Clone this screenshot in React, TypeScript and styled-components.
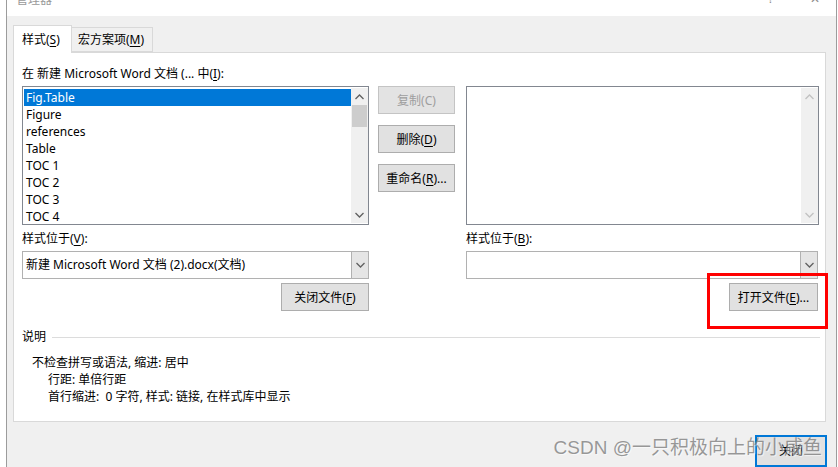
import React from 'react';
import styled, { createGlobalStyle } from 'styled-components';

const GlobalStyle = createGlobalStyle`
    html, body {
        margin: 0;
        padding: 0;
        background: #ffffff;
    }
    body {
        font-family: "Segoe UI", "Noto Sans", "Noto Sans CJK SC", sans-serif;
        font-size: 12px;
        color: #000000;
    }
    * {
        box-sizing: border-box;
    }
`;

const leftStyles = ['Fig.Table', 'Figure', 'references', 'Table', 'TOC 1', 'TOC 2', 'TOC 3', 'TOC 4'];

function Chevron({ up, muted }: { up?: boolean; muted?: boolean }) {
    return (
        <svg width="9" height="6" viewBox="0 0 9 6">
            <path
                d={up ? 'M0.5 5 L4.5 1 L8.5 5' : 'M0.5 1 L4.5 5 L8.5 1'}
                fill="none"
                stroke={muted ? '#c2c2c2' : '#606060'}
                strokeWidth="1.3"
            />
        </svg>
    );
}

function Key({ children }: { children: React.ReactNode }) {
    return <Mnemonic>{children}</Mnemonic>;
}

function App() {
    return (
        <>
            <GlobalStyle />
            <Window>
                <TitleBar>
                    <TitleText>管理器</TitleText>
                    <TitleControls>
                        <TitleGlyph>?</TitleGlyph>
                        <TitleGlyph>✕</TitleGlyph>
                    </TitleControls>
                </TitleBar>

                <Body>
                    <TabRow>
                        <Tab $active>
                            样式(<Key>S</Key>)
                        </Tab>
                        <Tab>
                            宏方案项(<Key>M</Key>)
                        </Tab>
                    </TabRow>

                    <Panel>
                        <Upper>
                            <LeftSide>
                                <Label>
                                    在 新建 Microsoft Word 文档 (... 中(<Key>I</Key>):
                                </Label>
                                <ListRow>
                                    <ListBox $width={347}>
                                        <ListItems>
                                            {leftStyles.map((name, i) => (
                                                <ListItem key={name} $selected={i === 0}>
                                                    {name}
                                                </ListItem>
                                            ))}
                                        </ListItems>
                                        <ScrollBar>
                                            <ScrollArrow>
                                                <Chevron up />
                                            </ScrollArrow>
                                            <ScrollThumb />
                                            <ScrollTrack />
                                            <ScrollArrow>
                                                <Chevron />
                                            </ScrollArrow>
                                        </ScrollBar>
                                    </ListBox>
                                    <ButtonStack>
                                        <Button $disabled>复制(C)</Button>
                                        <Button>
                                            删除(<Key>D</Key>)
                                        </Button>
                                        <Button>
                                            重命名(<Key>R</Key>)...
                                        </Button>
                                    </ButtonStack>
                                </ListRow>
                                <Label $top={6}>
                                    样式位于(<Key>V</Key>):
                                </Label>
                                <Combo $width={347}>
                                    <ComboText>新建 Microsoft Word 文档 (2).docx(文档)</ComboText>
                                    <ComboDrop>
                                        <Chevron />
                                    </ComboDrop>
                                </Combo>
                                <ButtonLine $width={347}>
                                    <Button $width={88}>
                                        关闭文件(<Key>F</Key>)
                                    </Button>
                                </ButtonLine>
                            </LeftSide>

                            <RightSide>
                                <Label />
                                <ListRow>
                                    <ListBox $width={353}>
                                        <ListItems />
                                        <ScrollBar>
                                            <ScrollArrow>
                                                <Chevron up muted />
                                            </ScrollArrow>
                                            <ScrollTrack />
                                            <ScrollArrow>
                                                <Chevron muted />
                                            </ScrollArrow>
                                        </ScrollBar>
                                    </ListBox>
                                </ListRow>
                                <Label $top={6}>
                                    样式位于(<Key>B</Key>):
                                </Label>
                                <Combo $width={352}>
                                    <ComboText />
                                    <ComboDrop>
                                        <Chevron />
                                    </ComboDrop>
                                </Combo>
                                <ButtonLine $width={352}>
                                    <Button $width={89}>
                                        打开文件(<Key>E</Key>)...
                                    </Button>
                                </ButtonLine>
                            </RightSide>
                        </Upper>

                        <DescHeader>
                            <span>说明</span>
                            <Rule />
                        </DescHeader>
                        <DescText>
                            <DescLine>不检查拼写或语法, 缩进: 居中</DescLine>
                            <DescLine $indent>行距: 单倍行距</DescLine>
                            <DescLine $indent>首行缩进:  0 字符, 样式: 链接, 在样式库中显示</DescLine>
                        </DescText>
                    </Panel>

                    <Footer>
                        <CloseButton>关闭</CloseButton>
                    </Footer>
                </Body>

                <Highlight />
                <Watermark>CSDN @一只积极向上的小咸鱼</Watermark>
            </Window>
        </>
    );
}

export default App;

const Window = styled.div`
    position: relative;
    margin-left: 6px;
    width: 831px;
    height: 467px;

    display: flex;
    flex-direction: column;

    border-left: 1px solid #9c9c9c;
    border-right: 1px solid #9c9c9c;

    overflow: hidden;
`;

const TitleBar = styled.div`
    height: 18px;
    background: #ffffff;

    display: flex;
    align-items: flex-start;

    padding-left: 9px;
    overflow: hidden;
`;

const TitleText = styled.div`
    margin-top: -8px;
    font-size: 12px;
    line-height: 16px;
    color: #9a9a9a;
`;

const TitleControls = styled.div`
    margin-left: auto;
    margin-right: 16px;

    display: flex;
    gap: 36px;
`;

const TitleGlyph = styled.div`
    margin-top: -9px;
    font-family: "DejaVu Sans", sans-serif;
    font-size: 12px;
    line-height: 16px;
    color: #8c8c8c;
`;

const Body = styled.div`
    flex: 1;
    background: #f0f0f0;

    display: flex;
    flex-direction: column;

    padding: 9px 10px 0 6px;
`;

const TabRow = styled.div`
    position: relative;
    z-index: 1;

    height: 28px;
    margin-bottom: -1px;

    display: flex;
    align-items: flex-start;
`;

const Tab = styled.div<{ $active?: boolean }>`
    height: ${(p) => (p.$active ? '28px' : '25px')};
    width: ${(p) => (p.$active ? '59px' : '81px')};
    margin-top: ${(p) => (p.$active ? '0' : '2px')};

    padding-left: ${(p) => (p.$active ? '8px' : '6px')};
    padding-top: ${(p) => (p.$active ? '6px' : '4px')};

    background: ${(p) => (p.$active ? '#ffffff' : '#f0f0f0')};
    border: 1px solid #d9d9d9;
    border-bottom: ${(p) => (p.$active ? 'none' : '1px solid #d9d9d9')};
    border-left: ${(p) => (p.$active ? '1px solid #d9d9d9' : 'none')};

    line-height: 16px;
    white-space: nowrap;
`;

const Mnemonic = styled.span`
    text-decoration: underline;
    text-underline-offset: 2px;
`;

const Panel = styled.div`
    height: 370px;
    background: #ffffff;
    border: 1px solid #d9d9d9;

    padding: 13px 5px 0 8px;

    display: flex;
    flex-direction: column;
`;

const Upper = styled.div`
    display: flex;
    gap: 11px;
`;

const LeftSide = styled.div`
    width: 433px;
    display: flex;
    flex-direction: column;
`;

const RightSide = styled.div`
    width: 353px;
    display: flex;
    flex-direction: column;
`;

const Label = styled.div<{ $top?: number }>`
    height: 16px;
    line-height: 16px;
    margin-top: ${(p) => p.$top ?? 0}px;
    white-space: nowrap;
`;

const ListRow = styled.div`
    margin-top: 4px;
    display: flex;
    gap: 9px;
`;

const ListBox = styled.div<{ $width: number }>`
    width: ${(p) => p.$width}px;
    height: 139px;

    border: 1px solid #828790;
    padding: 1px 0 1px 1px;

    display: flex;
    background: #ffffff;
`;

const ListItems = styled.div`
    flex: 1;
    display: flex;
    flex-direction: column;
    padding-top: 1px;
`;

const ListItem = styled.div<{ $selected?: boolean }>`
    height: 17px;
    line-height: 17px;
    padding-left: 2px;

    background: ${(p) => (p.$selected ? '#0078d7' : 'transparent')};
    color: ${(p) => (p.$selected ? '#ffffff' : '#000000')};
`;

const ScrollBar = styled.div`
    width: 17px;
    background: #f0f0f0;

    display: flex;
    flex-direction: column;
`;

const ScrollArrow = styled.div`
    height: 17px;
    display: flex;
    align-items: center;
    justify-content: center;
`;

const ScrollThumb = styled.div`
    height: 22px;
    margin: 0 1px;
    background: #cdcdcd;
`;

const ScrollTrack = styled.div`
    flex: 1;
`;

const ButtonStack = styled.div`
    width: 77px;
    display: flex;
    flex-direction: column;
    gap: 11px;
`;

const Button = styled.div<{ $disabled?: boolean; $width?: number }>`
    width: ${(p) => (p.$width ? `${p.$width}px` : '100%')};
    height: 28px;

    display: flex;
    align-items: center;
    justify-content: center;

    background: ${(p) => (p.$disabled ? '#e3e3e3' : '#e1e1e1')};
    border: 1px solid ${(p) => (p.$disabled ? '#c4c4c4' : '#adadad')};
    color: ${(p) => (p.$disabled ? '#9e9e9e' : '#000000')};

    white-space: nowrap;
    cursor: default;
`;

const Combo = styled.div<{ $width: number }>`
    margin-top: 4px;
    width: ${(p) => p.$width}px;
    height: 28px;

    display: flex;
    border: 1px solid #b1b1b1;
    background: #ffffff;
`;

const ComboText = styled.div`
    flex: 1;
    padding-left: 3px;
    line-height: 26px;
    white-space: nowrap;
`;

const ComboDrop = styled.div`
    width: 17px;
    background: #e5e5e5;
    border-left: 1px solid #b1b1b1;

    display: flex;
    align-items: center;
    justify-content: center;
`;

const ButtonLine = styled.div<{ $width: number }>`
    margin-top: 4px;
    width: ${(p) => p.$width}px;
    display: flex;
    justify-content: flex-end;
`;

const DescHeader = styled.div`
    margin-top: 18px;
    height: 16px;
    line-height: 16px;

    display: flex;
    align-items: center;
    gap: 6px;
`;

const Rule = styled.div`
    flex: 1;
    height: 1px;
    background: #dcdcdc;
`;

const DescText = styled.div`
    margin-top: 9px;
    padding-left: 10px;
    display: flex;
    flex-direction: column;
`;

const DescLine = styled.div<{ $indent?: boolean }>`
    height: 17px;
    line-height: 17px;
    padding-left: ${(p) => (p.$indent ? '16px' : '0')};
    white-space: pre;
`;

const Footer = styled.div`
    padding-top: 13px;
    display: flex;
    justify-content: flex-end;
`;

const CloseButton = styled.div`
    width: 72px;
    height: 32px;
    margin-right: -1px;

    background: #e1e1e1;
    border: 2px solid #0078d7;

    display: flex;
    align-items: center;
    justify-content: center;
    padding-bottom: 2px;
`;

/* 빨간 표시 상자 (스크린샷 주석) */
const Highlight = styled.div`
    position: absolute;
    left: 700px;
    top: 273px;
    width: 121px;
    height: 56px;
    border: 3px solid #ff0000;
    pointer-events: none;
`;

const Watermark = styled.div`
    position: absolute;
    right: 14px;
    top: 435px;

    font-family: "Liberation Sans", "Noto Sans CJK SC", sans-serif;
    font-size: 19px;
    line-height: 26px;
    color: rgba(120, 120, 120, 0.75);
    text-shadow: 1px 1px 1px rgba(255, 255, 255, 0.6);
    white-space: nowrap;
    pointer-events: none;
`;
